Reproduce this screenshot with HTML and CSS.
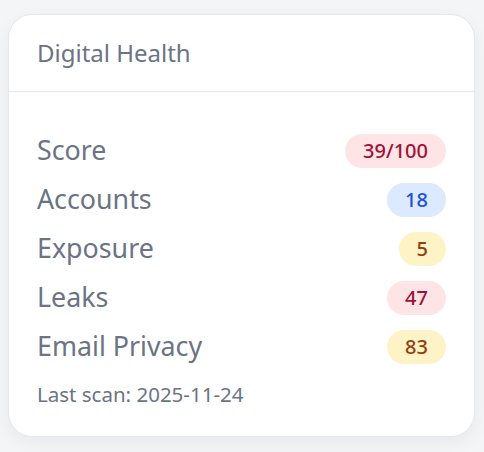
FILE: index.html
```html
<!DOCTYPE html>
<html lang="en">
<head>
<meta charset="utf-8">
<title>Digital Health</title>
<link rel="stylesheet" href="styles.css">
</head>
<body>
  <section class="card">
    <header class="card-header">Digital Health</header>
    <div class="card-body">
      <ul class="stats">
        <li class="stat"><span class="label">Score</span><span class="pill pill-red">39/100</span></li>
        <li class="stat"><span class="label">Accounts</span><span class="pill pill-blue">18</span></li>
        <li class="stat"><span class="label">Exposure</span><span class="pill pill-yellow">5</span></li>
        <li class="stat"><span class="label">Leaks</span><span class="pill pill-red">47</span></li>
        <li class="stat"><span class="label">Email Privacy</span><span class="pill pill-yellow">83</span></li>
      </ul>
      <p class="meta">Last scan: 2025-11-24</p>
    </div>
  </section>
</body>
</html>
```

FILE: styles.css
```css
* { box-sizing: border-box; }

html, body {
  margin: 0;
  padding: 0;
}

body {
  background: #f4f5f7;
  font-family: "Noto Sans", "Open Sans", sans-serif;
  color: #6b7385;
  padding: 14px 9px 16px 8px;
}

.card {
  background: #ffffff;
  border: 1px solid #e2e8f0;
  border-radius: 24px;
  box-shadow: 0 6px 18px rgba(15, 23, 42, 0.05);
  overflow: hidden;
}

.card-header {
  padding: 20px 28px;
  font-size: 24px;
  line-height: 36px;
  color: #6b7385;
  border-bottom: 1px solid #e2e8f0;
}

.card-body {
  padding: 37px 28px 27px;
}

.stats {
  list-style: none;
  margin: 0;
  padding: 0;
  display: flex;
  flex-direction: column;
  gap: 7px;
}

.stat {
  display: flex;
  align-items: center;
  justify-content: space-between;
  height: 42px;
}

.label {
  font-size: 26.8px;
  line-height: 42px;
  color: #6b7385;
}

.pill {
  display: inline-flex;
  align-items: center;
  justify-content: center;
  height: 34px;
  padding: 0 18px;
  border-radius: 17px;
  font-size: 20px;
  font-weight: 500;
  line-height: 34px;
  margin-top: 2px;
}

.pill-red { background: #ffe4e6; color: #9f1239; }
.pill-blue { background: #dbeafe; color: #1d4ed8; }
.pill-yellow { background: #fef3c7; color: #92400e; }

.meta {
  margin: 12px 0 0;
  font-size: 20.5px;
  line-height: 30px;
  color: #6b7385;
}
```
